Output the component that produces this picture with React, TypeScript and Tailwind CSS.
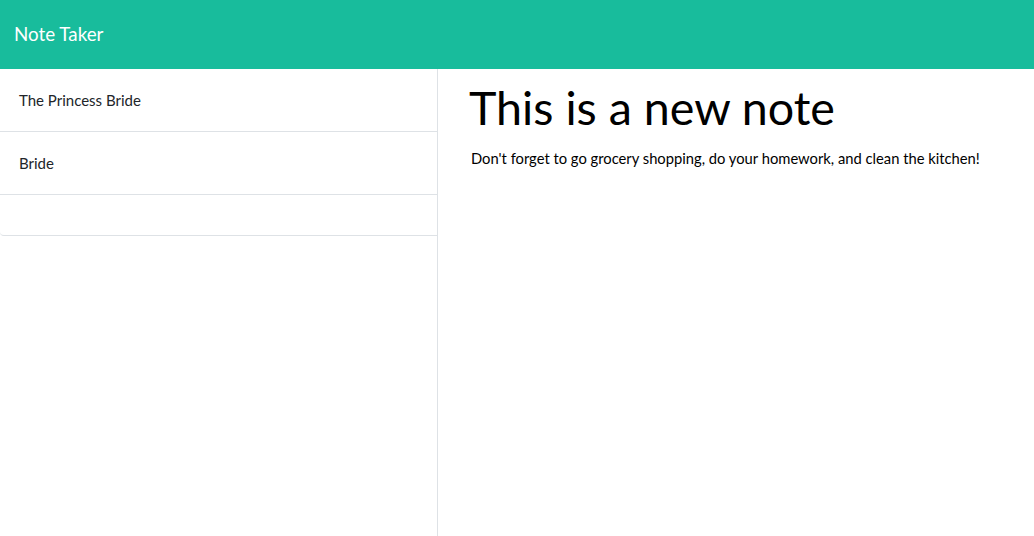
const NOTES = ["The Princess Bride", "Bride", ""];

export default function App() {
  return (
    <div className="min-h-screen bg-white font-['Lato',sans-serif] text-[#212529]">
      <nav className="h-[69px] bg-[#18bc9c] flex items-center px-[14px]">
        <span className="text-white text-[18.8px]">Note Taker</span>
      </nav>
      <div className="flex h-[467px]">
        <div className="w-[438px] border-r border-[#dee2e6] shrink-0">
          <ul className="w-[437px]">
            {NOTES.map((n, i) => (
              <li
                key={i}
                className="px-[19px] py-[20px] text-[15px] leading-[22px] border-b border-[#dee2e6] min-h-[41px] last:rounded-bl"
              >
                {n}
              </li>
            ))}
          </ul>
        </div>
        <div className="flex-1 pl-[31px] pt-[10px]">
          <h1 className="text-[46.6px] leading-[56px] text-black">This is a new note</h1>
          <p className="mt-[12px] pl-[2px] text-[14.75px] leading-[22px] text-black">
            Don't forget to go grocery shopping, do your homework, and clean the kitchen!
          </p>
        </div>
      </div>
    </div>
  );
}
